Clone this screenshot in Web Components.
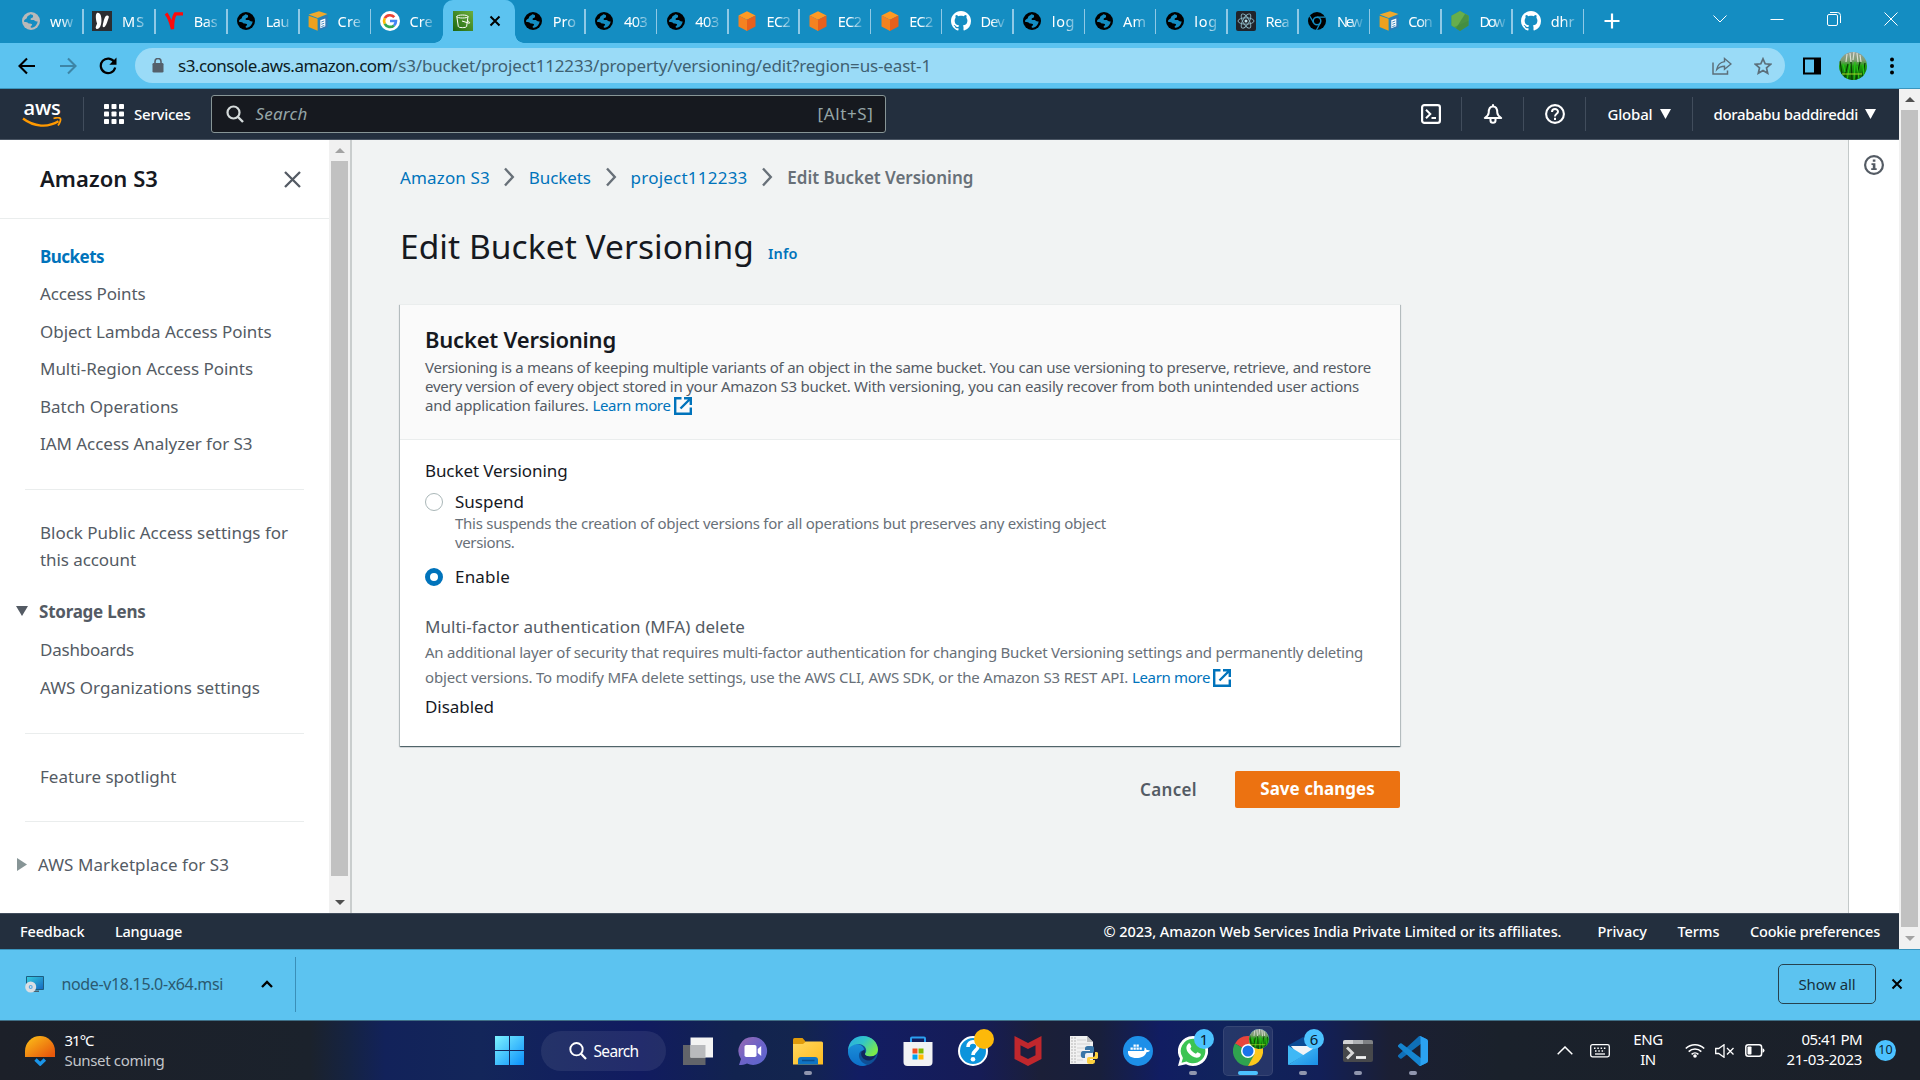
<!DOCTYPE html>
<html lang="en">
<head>
<meta charset="utf-8">
<title>Edit Bucket Versioning</title>
<style>
html,body{margin:0;padding:0}
body{width:1920px;height:1080px;overflow:hidden;display:flex;flex-direction:column;font-family:"Noto Sans","Open Sans",sans-serif;background:#f1f3f3}
body>*{box-sizing:border-box}
</style>
</head>
<body>
<tab-strip></tab-strip>
<address-bar></address-bar>
<console-page></console-page>
<download-bar></download-bar>
<win-taskbar></win-taskbar>
<script>
const define = (name, css, html) => customElements.define(name, class extends HTMLElement {
  connectedCallback() {
    if (this.shadowRoot) return;
    const root = this.attachShadow({ mode: 'open' });
    root.innerHTML = `<style>*{box-sizing:border-box}${css}</style>` + (typeof html === 'function' ? html(this) : html);
  }
});

const globe = c => `<circle cx="10" cy="10" r="9" fill="${c}"/><path d="M9.3 3.2c-1.2 1.5-3.2 1.4-3.3 3.2-.1 1.500-2.500 1.600-2.900 3.100-.2 1.200.2 1.700 1.300 1.600 1.800-.3 2.300 1.100 3.300 1.300 1.300.2 3.300-.2 3.400 1.100.1 1.300-1.500 1.300-1.500 2.300 0 .7.6 1.200 1.500 1 3-.7 5.300-3.500 5.600-6.300-1.300.3-2.200-.2-3.200-1.100-1.200-1-2.700.1-3.700-.700-.9-.9.5-1.600 1.600-2 1.200-.5.600-1.900.4-2.600z" fill="#148dc2"/>`;
const cube = `<path d="M10 .2l8.500 4.300L10 8.800 1.500 4.500z" fill="#ff9a22"/><path d="M1.500 4.500L10 8.800v11.200l-8.500-4.500z" fill="#f58220"/><path d="M18.500 4.500L10 8.800v11.200l8.500-4.500z" fill="#e8601c"/>`;
const box = `<path d="M.6 3.600L11 .2l8.500 2.700-9.800 4z" fill="#f0a92c"/><path d="M.6 4.800l9 3v12L.6 16z" fill="#eda11f"/><path d="M10.600 7.600l9-3.500v12.200l-9 3.500z" fill="#2e7cb8"/><path d="M12.300 9.300l5-1.900v7.900l-5 2z" fill="#fff"/><path d="M13.300 11l3-1.100M13.300 13.300l3-1.100M13.300 15.600l3-1.100" stroke="#2e7cb8" stroke-width=".9"/>`;
const github = `<g transform="scale(1.25)"><path fill="#fff" d="M8 0C3.580 0 0 3.580 0 8c0 3.540 2.290 6.530 5.470 7.590.4.070.55-.17.55-.38 0-.19-.01-.82-.01-1.490-2.010.37-2.530-.49-2.690-.94-.09-.23-.48-.94-.82-1.130-.28-.15-.68-.52-.01-.53.63-.01 1.080.58 1.230.82.72 1.210 1.870.87 2.330.66.070-.52.28-.87.51-1.070-1.780-.2-3.640-.89-3.640-3.950 0-.87.31-1.590.82-2.150-.08-.2-.36-1.020.08-2.120 0 0 .67-.21 2.200.82.64-.18 1.320-.27 2-.27s1.360.09 2 .27c1.530-1.040 2.200-.82 2.200-.82.44 1.100.16 1.920.08 2.120.51.56.82 1.270.82 2.150 0 3.070-1.870 3.750-3.650 3.950.29.25.54.73.54 1.480 0 1.070-.01 1.930-.01 2.200 0 .21.15.46.55.38A8 8 0 0 0 16 8c0-4.420-3.580-8-8-8z"/></g>`;

const ICONS = {
  globeGray: ['0 0 20 20', globe('#b9b9b9')],
  globe: ['0 0 20 20', globe('#000')],
  ms: ['0 0 20 20', `<path fill="#2b2d31" d="M0 0h20v20H0z"/><path fill="#fff" d="M5 2c2.500-.8 4 1.500 4.300 5 .2 2.500.3 4.500-.5 7-.8 3-3.300 4.800-4.600 3.800-1.300-1.200.2-3.300.9-5.300C4 10 3 3 5 2z"/><path fill="#fff" d="M14.300 4.800c1.700-.8 3.200.2 2.300 2.200-1 2.500-1.600 6-3.600 8.500-1.300 1.500-2.600.5-2.300-1 .7-3.500 1.600-8.500 3.600-9.700z"/>`],
  vtutor: ['0 0 20 20', `<path d="M2 2.500C5 6 7 12 8.500 18 8.500 10 9.500 5.500 11.500 2.800H19" fill="none" stroke="#ff0a0a" stroke-width="3.300"/>`],
  box: ['0 0 20 20', box],
  google: ['0 0 20 20', `<circle cx="10" cy="10" r="10" fill="#fff"/><g fill="none" stroke-width="2.700"><path d="M14.300 6.200A5.900 5.900 0 0 0 4.800 7.200" stroke="#ea4335"/><path d="M4.800 7.200a5.900 5.900 0 0 0 0 5.600" stroke="#fbbc05"/><path d="M4.800 12.800a5.900 5.900 0 0 0 9.200 1.600" stroke="#34a853"/><path d="M14 14.400A5.700 5.700 0 0 0 15.900 10H10" stroke="#4285f4"/></g>`],
  s3: ['0 0 20 20', `<defs><linearGradient id="s" x1="0" y1="1" x2="1" y2="0"><stop offset="0" stop-color="#1b660f"/><stop offset="1" stop-color="#6cae3e"/></linearGradient></defs><path fill="url(#s)" d="M0 0h20v20H0z"/><g fill="none" stroke="#fff"><path d="M3.800 5.500c0-2 11.200-2 11.200 0s-11.200 2-11.200 0zl1.500 10c.3 1.500 8 1.500 8.300 0L15 5.500"/><path d="M9 10l7.300 2.300c1-.8-.5-2-2.300-3"/></g>`],
  cube: ['0 0 20 20', cube],
  github: ['0 0 20 20', github],
  react: ['0 0 20 20', `<rect width="20" height="20" rx="2" fill="#20232a"/><g fill="none" stroke="#8fb9c6" stroke-width=".9"><ellipse cx="10" cy="10" rx="8" ry="3.200"/><ellipse cx="10" cy="10" rx="8" ry="3.200" transform="rotate(60 10 10)"/><ellipse cx="10" cy="10" rx="8" ry="3.200" transform="rotate(120 10 10)"/></g><circle cx="10" cy="10" r="1.500" fill="#bfe6f0"/>`],
  chromeDark: ['0 0 20 20', `<circle cx="10" cy="10" r="9" fill="#000"/><circle cx="10" cy="10" r="3.800" fill="none" stroke="#148dc2" stroke-width="1.500"/><path d="M10 6.200h8M6.700 11.900L2.700 5M13.300 11.900L9.500 19" stroke="#148dc2" stroke-width="1.300"/>`],
  node: ['0 0 20 20', `<path d="M10 0l8.500 4.800v9.600L10 20l-8.500-5.600V4.800z" fill="#539e43"/><path d="M10 0l8.500 4.800v5L4 16 1.500 14.400V4.800z" fill="#67ae4c"/><path d="M6 17.300L15 3l3.500 1.800v9.600L10 20z" fill="#3f873f" opacity=".7"/>`],
  x: ['0 0 12 12', `<path d="M1.500 1.500l9 9m0-9l-9 9" stroke="#000" stroke-width="2"/>`],
  plus: ['0 0 16 16', `<path d="M8 .5v15M.5 8h15" stroke="#fff" stroke-width="2.200"/>`],
  winChevron: ['0 0 14 8', `<path d="M.5.5L7 7 13.500.5" fill="none" stroke="#fff" stroke-width="1"/>`],
  winMin: ['0 0 14 14', `<path d="M.5 7.500h13" stroke="#fff"/>`],
  winMax: ['0 0 14 14', `<rect x=".5" y="2.500" width="10" height="11" rx="1.500" fill="none" stroke="#fff"/><path d="M3 .5h7.500a3 3 0 0 1 3 3v7.500" fill="none" stroke="#fff"/>`],
  winClose: ['0 0 14 14', `<path d="M.5.5l13 13m0-13L.5 13.500" stroke="#fff"/>`],
  back: ['0 0 18 18', `<path d="M17 9H2M9 1.500L1.500 9 9 16.500" fill="none" stroke="#000" stroke-width="2.100"/>`],
  fwd: ['0 0 18 18', `<path d="M1 9h15M9 1.500L16.500 9 9 16.500" fill="none" stroke="#3d85a6" stroke-width="2.100"/>`],
  reload: ['0 0 18 18', `<path d="M15.300 5A7.300 7.300 0 1 0 16.200 10.500" fill="none" stroke="#000" stroke-width="2.200"/><path d="M17.500.6v7.200h-7.200z"/>`],
  lock: ['0 0 12 15', `<rect x=".5" y="5" width="11" height="9.500" rx="1.300" fill="#54606b"/><path d="M3 5V3.500a3 3 0 0 1 6 0V5" fill="none" stroke="#54606b" stroke-width="1.600"/>`],
  share: ['0 0 20 18', `<path d="M1 5.500V17h14.500v-3.500" fill="none" stroke="#5c6f7a" stroke-width="1.500"/><path d="M12.500 1.500L19 7l-6.500 5.300V9.200c-3.500 0-5.700 1-7.800 3.400.7-4 3.300-7.300 7.800-8z" fill="none" stroke="#5c6f7a" stroke-width="1.400"/>`],
  star: ['0 0 18 18', `<path d="M9 1.800l2.200 5 5.400.5-4.100 3.600 1.200 5.300L9 13.400l-4.700 2.800 1.200-5.300L1.400 7.300l5.400-.5z" fill="none" stroke="#5c6f7a" stroke-width="1.700"/>`],
  panel: ['0 0 18 18', `<rect x="1" y="1.500" width="16" height="15" fill="none" stroke="#000" stroke-width="2"/><path d="M11 1h7v16h-7z"/>`],
  avatar: ['0 0 28 28', `<defs><clipPath id="c"><circle cx="14" cy="14" r="14"/></clipPath><linearGradient id="a" x1="0" y1="0" x2="0" y2="1"><stop offset="0" stop-color="#9aa197"/><stop offset=".3" stop-color="#7d9c70"/><stop offset=".5" stop-color="#1fa010"/><stop offset="1" stop-color="#0c5a06"/></linearGradient></defs><g clip-path="url(#c)"><path fill="url(#a)" d="M0 0h28v28H0z"/><path d="M5 28L9 12M13 28L12 10M17 28l4-18M23 28l3-17M3 22L1 9" stroke="#0a3d06" stroke-width="1.200" fill="none"/><path d="M8 28l3-16M15 28l1-18M20 27l-2-13M25 25l-1-12M6 20L4 12" stroke="#27c316" stroke-width="1.200" fill="none"/><path d="M3 22h20" stroke="#a6d629" stroke-width="1"/><path d="M8 2l-1 8M11 1l1 9M15 0l-1 8M18 1l1 9M21 3l1 7" stroke="#d9ded2" stroke-width="1.200"/></g>`],
  dots: ['0 0 4 18', `<circle cx="2" cy="2.500" r="2"/><circle cx="2" cy="9" r="2"/><circle cx="2" cy="15.500" r="2"/>`],
  smile: ['0 0 40 11', `<path d="M1 1.500c11 8.500 25 9.300 35.500 2.800" fill="none" stroke="#f90" stroke-width="2.300"/><path d="M31.500 1.500c2.500-.8 6-.9 6.800 0 .8 1-.4 4.800-2.300 7" fill="none" stroke="#f90" stroke-width="1.800"/>`],
  grid: ['0 0 20 20', `<g fill="#fff">${[0, 7.5, 15].map(y => [0, 7.5, 15].map(x => `<rect x="${x}" y="${y}" width="5" height="5" rx=".8"/>`).join('')).join('')}</g>`],
  mag: ['0 0 18 18', `<circle cx="7.500" cy="7.500" r="6" fill="none" stroke="#d5dbdb" stroke-width="2.200"/><path d="M12 12l5 5" stroke="#d5dbdb" stroke-width="2.400"/>`],
  shell: ['0 0 20 20', `<rect x="1.100" y="1.100" width="17.800" height="17.800" rx="2.200" fill="none" stroke="#fff" stroke-width="2.200"/><path d="M5 5.700L9.300 10 5 14.300M10.500 14H15" fill="none" stroke="#fff" stroke-width="2"/>`],
  bell: ['0 0 20 20', `<path d="M10 .2v3M10 2.600c-4.300 0-4.300 4-4.300 6.200 0 2.200-1.600 3.700-3.900 5.200h16.400c-2.300-1.500-3.900-3-3.900-5.200 0-2.200 0-6.200-4.300-6.200z" fill="none" stroke="#fff" stroke-width="2" stroke-linejoin="round"/><path d="M7.500 14.500v2c0 3 5 3 5 0v-2" fill="none" stroke="#fff" stroke-width="2"/>`],
  help: ['0 0 20 20', `<circle cx="10" cy="10" r="8.900" fill="none" stroke="#fff" stroke-width="2.100"/><path d="M7 8c0-4 6-3.800 6-.3 0 2.200-3 2-3 4.800" fill="none" stroke="#fff" stroke-width="2"/><path d="M9 13.800h2V16H9z" fill="#fff"/>`],
  tri: ['0 0 11 10', `<path d="M0 0h11L5.500 10z" fill="currentColor"/>`],
  triRight: ['0 0 10 13', `<path d="M0 0l10 6.500L0 13z" fill="#879596"/>`],
  close: ['0 0 17 17', `<path d="M1 1l15 15M16 1L1 16" stroke="#545b64" stroke-width="2.300"/>`],
  info: ['0 0 20 20', `<circle cx="10" cy="10" r="8.900" fill="none" stroke="#545b64" stroke-width="2.200"/><path d="M8.800 4.500h2.600v2.300H8.800zM7.500 8.200h3.900v5h1.300v1.900H7.200v-1.900h1.600v-3.100H7.500z" fill="#545b64"/>`],
  crumb: ['0 0 12 20', `<path d="M2 1.500L9.800 10 2 18.500" fill="none" stroke="#687078" stroke-width="2.400"/>`],
  ext: ['0 0 18 18', `<path d="M7.500 1.200H1.200v15.600h15.600v-6.300" fill="none" stroke="#0073bb" stroke-width="2.400"/><path d="M10 1.200h6.800V8M16.500 1.500L6.500 11.500" fill="none" stroke="#0073bb" stroke-width="2.400"/>`],
  msi: ['0 0 20 17', `<defs><linearGradient id="m" x1="0" y1="0" x2="1" y2="1"><stop offset="0" stop-color="#35d0e0"/><stop offset="1" stop-color="#1565c0"/></linearGradient></defs><path d="M1.500.5h17v13h-17z" fill="url(#m)" stroke="#1c5d80"/><path d="M8 14.500h6v1.500H7z" fill="#46606e"/><circle cx="5.700" cy="11" r="5.500" fill="#dcdfe3"/><circle cx="5.700" cy="11" r="2" fill="#5aa9e0"/><circle cx="5.700" cy="11" r=".8" fill="#fff"/>`],
  up: ['0 0 12 8', `<path d="M1 7l5-5 5 5" fill="none" stroke="#000" stroke-width="2.300"/>`],
  sunset: ['0 0 30 30', `<defs><linearGradient id="u" x1="0" y1="0" x2="1" y2="1"><stop offset="0" stop-color="#fcc419"/><stop offset=".9" stop-color="#e8590c"/></linearGradient></defs><path d="M0 21V15a15 15 0 0 1 30 0v6z" fill="url(#u)"/><path d="M10.500 23.500l4.700 4.500 4.700-4.500" fill="none" stroke="#1b95e8" stroke-width="3.400"/>`],
  win: ['0 0 29 29', `<defs><linearGradient id="w" gradientUnits="userSpaceOnUse" x1="0" y1="0" x2="29" y2="29"><stop offset="0" stop-color="#7df3ff"/><stop offset="1" stop-color="#0a8ffb"/></linearGradient></defs><path d="M0 0h14v14H0zM15 0h14v14H15zM0 15h14v14H0zM15 15h14v14H15z" fill="url(#w)"/>`],
  magW: ['0 0 18 18', `<circle cx="7.500" cy="7.200" r="6.200" fill="none" stroke="#fff" stroke-width="1.900"/><path d="M12 11.700l5 5.300" stroke="#fff" stroke-width="2.200"/>`],
  taskview: ['0 0 30 30', `<path d="M0 9h22.500v20H0z" fill="#62646a"/><path d="M7.500 1.500H30v20H7.500z" fill="#f3f3f3"/><path d="M7.500 9h15v12.500h-15z" fill="#b9babd"/>`],
  chat: ['0 0 30 30', `<defs><linearGradient id="t" x1="0" y1="0" x2="1" y2="1"><stop offset="0" stop-color="#9b6bb0"/><stop offset=".5" stop-color="#6d63c8"/><stop offset="1" stop-color="#5b66cf"/></linearGradient></defs><path d="M15 1a14 14 0 1 1-6 26.600C6.500 29 4 29 1 29l2-6A14 14 0 0 1 15 1z" fill="url(#t)"/><rect x="6.500" y="9" width="12" height="12" rx="1.800" fill="#fff"/><path d="M19.700 13l3.500-3v10l-3.500-3z" fill="#fff"/>`],
  explorer: ['0 0 30 30', `<defs><linearGradient id="e" x1="0" y1="0" x2="1" y2="1"><stop offset="0" stop-color="#ffd75e"/><stop offset="1" stop-color="#fdbb20"/></linearGradient></defs><path d="M0 3.500q0-1.500 1.500-1.500h8l3.500 4v5H0z" fill="#e09b0b"/><path d="M0 8h10l3-2.500h15.500Q30 5.500 30 7v21.500H0z" fill="url(#e)"/><path d="M5 28.500V24q0-3 3-3h14q3 0 3 3v4.500z" fill="#0f74c4"/><path d="M9 24.500h12.500" stroke="#0a4f8f" stroke-width="1.500"/>`],
  edge: ['0 0 30 30', `<defs><linearGradient id="g" x1="0" y1="0" x2="1" y2=".6"><stop offset="0" stop-color="#2aa7e8"/><stop offset=".5" stop-color="#32c6c6"/><stop offset="1" stop-color="#7bea4a"/></linearGradient><linearGradient id="h" x1="0" y1="0" x2="0" y2="1"><stop offset="0" stop-color="#1b8fd8"/><stop offset="1" stop-color="#0c6fc9"/></linearGradient></defs><circle cx="15" cy="15" r="15" fill="#0f4f96"/><path d="M15 30A15 15 0 0 1 0 14c2-6 9-7 12.500-5 3 1.500 4 4 3 5.500-3 0-5 2-4.500 6 .6 4 4 7 8 8.300A15 15 0 0 1 15 30z" fill="url(#h)"/><path d="M0 14C1 5 7 0 15 0c9 0 15 7 15 13.500 0 4.500-3.500 7-7.500 7-3.500 0-6-1.300-5.500-2.700 3-3 .5-8.800-5-9.600C7 7.500 2 10 0 14z" fill="url(#g)"/><path d="M17 17.800c-.5 1.400 2 2.700 5.500 2.700 2.500 0 4.500-.7 6-2.500-1.500 4-5 7-8.500 6.500-4.500-.5-8-4.500-6.500-8.500.7-1.300 2.500-2 3.500-1.500z" fill="#12265c"/>`],
  store: ['0 0 30 30', `<path d="M8 8V2.500q0-1 1-1h12q1 0 1 1V8" fill="none" stroke="#2a9ff0" stroke-width="2"/><path d="M.5 6h29v20q0 4-4 4h-21q-4 0-4-4z" fill="#f1f2f4"/><path d="M9.500 12.500h5v5h-5z" fill="#f25022"/><path d="M15.500 12.500h5v5h-5z" fill="#7fba00"/><path d="M9.500 18.500h5v5h-5z" fill="#00a4ef"/><path d="M15.500 18.500h5v5h-5z" fill="#ffb900"/>`],
  gethelp: ['0 0 30 30', `<circle cx="15" cy="15" r="14" fill="#0c94dc" stroke="#fff" stroke-width="2"/><path d="M10 11c0-7 10-6.500 10-.5 0 4-5 4-5 8.500" fill="none" stroke="#fff" stroke-width="3.600"/><circle cx="15" cy="23.200" r="2.300" fill="#fff"/>`],
  mcafee: ['0 0 30 30', `<path d="M1.500 0L15 7 28.500 0v23L15 30 1.500 23z" fill="#c0272d"/><path d="M7.500 9.300L15 13l7.500-3.700v10L15 23l-7.500-3.700z" fill="#1b1f3f"/>`],
  py: ['0 0 30 30', `<path d="M2 0h17l6 6v22H2z" fill="#f1f1f1"/><path d="M4 1v26M7 1v26" stroke="#b5b5b5" stroke-dasharray="2 1"/><path d="M9 4h9M9 8h13M9 12h13M9 16h8M9 20h5M9 24h6" stroke="#d3d3d3"/><path d="M19 0v6h6z" fill="#bbb"/><path d="M21 10c-4 0-4 1-4 4h5v1h-7c-3 0-3 7 0 7h2v-3q0-2 2-2h5q2 0 2-2v-3c0-2-2-2-5-2z" fill="#3a76a8"/><path d="M23 28c4 0 4-1 4-4h-5v-1h7c2-1 2-7-.5-7H27v3q0 2-2 2h-4q-2 0-2 2v3c0 2 2 2 4 2z" fill="#fdd140"/>`],
  docker: ['0 0 30 30', `<circle cx="15" cy="15" r="15" fill="#1d8fe8"/><path d="M5 15h16c.8-1.500.5-3 .5-3.500 1.500.5 2 1.500 2 2.500 1-.2 2.500-.1 3.500.6-.7 1.300-2 1.700-3.500 1.700C22 20.500 18 22 13.500 22 8 22 4.500 20 5 15z" fill="#fff"/><path d="M7.500 11.500h2.300v2.300H7.500zM10.500 11.500h2.300v2.300h-2.300zM13.500 11.500h2.300v2.300h-2.300zM16.500 11.500h2.300v2.300h-2.300zM10.500 8.500h2.300v2.300h-2.300zM13.500 8.500h2.300v2.300h-2.300z" fill="#fff"/>`],
  whatsapp: ['0 0 30 30', `<path d="M15 0a15 15 0 1 1-7 28.200L0 30l2-7.500A15 15 0 0 1 15 0z" fill="#fff"/><path d="M15 2.700a12.300 12.300 0 1 1-6.500 22.700l-5 1.300 1.400-4.800A12.300 12.300 0 0 1 15 2.700z" fill="#3cc453"/><path d="M10.500 7.500c1-.5 1.500-.2 2 1l.8 2c.2.700-.9 1.600-1 2 1 2.400 3 4.200 5.500 5.200.5 0 1.200-1.300 1.800-1.400l3 1.400c.6.500-.1 2.800-1.600 3.600-3.500 1.500-8-1.300-10.500-4.300-2-2.500-3.500-6.500 0-9.500z" fill="#fff"/>`],
  chrome: ['0 0 30 30', `<path d="M15 15L2 7.500A15 15 0 0 1 28 7.500z" fill="#e8453c"/><path d="M15 15L2 7.500A15 15 0 0 0 15 30l6.500-11z" fill="#2fa34f"/><path d="M15 30A15 15 0 0 0 28 7.500H15l6.300 11z" fill="#fdc81c"/><circle cx="15" cy="15" r="7" fill="#fff"/><circle cx="15" cy="15" r="5.500" fill="#1a73e8"/>`],
  mail: ['0 0 30 30', `<defs><linearGradient id="l" x1="0" y1="0" x2="1" y2="1"><stop offset="0" stop-color="#50c8f8"/><stop offset="1" stop-color="#1a8ee6"/></linearGradient></defs><path d="M0 9.500L15 1l15 8.500V20H0z" fill="#0a4a94"/><path d="M3 10h24l-6 10-11-1z" fill="#f2f4f7"/><path d="M0 9.500l16 10L0 29z" fill="#3fb8f5"/><path d="M30 9.500L0 29h30z" fill="url(#l)"/>`],
  term: ['0 0 30 30', `<rect y="4" width="30" height="22" rx="2" fill="#47484b"/><path d="M0 8V6q0-2 2-2h18v4z" fill="#d2d2d4"/><path d="M10 4h10v4H10z" fill="#aeb0b3"/><path d="M20 4h8q2 0 2 2v2H20z" fill="#7f8184"/><path d="M4 11.500l5.500 5.500L4 22.500" fill="none" stroke="#d9d9d9" stroke-width="2.800"/><path d="M13 21.500h10" stroke="#f2f2f2" stroke-width="2.800"/>`],
  vscode: ['0 0 100 100', `<path fill="#0f6fb8" d="M96.460 10.800L75.860.88a6.230 6.230 0 0 0-7.100 1.200L1.300 63.580a4.170 4.170 0 0 0 0 6.160l5.510 5.010a4.170 4.170 0 0 0 5.320.24L93.360 13.400c2.730-2.070 6.640-.12 6.640 3.300v-.24a6.250 6.250 0 0 0-3.540-5.630z"/><path fill="#1585d0" d="M96.460 89.170l-20.600 9.920a6.230 6.230 0 0 1-7.100-1.210L1.300 36.370a4.170 4.170 0 0 1 0-6.170l5.510-5a4.170 4.170 0 0 1 5.320-.24l81.230 61.620c2.730 2.070 6.640.12 6.640-3.300v.24a6.250 6.250 0 0 1-3.540 5.630z"/><path fill="#2ba2f2" d="M75.860 99.100a6.230 6.230 0 0 1-7.100-1.210c2.300 2.310 6.240.68 6.240-2.590V4.670c0-3.260-3.940-4.890-6.240-2.580a6.230 6.230 0 0 1 7.100-1.210l20.600 9.900A6.250 6.250 0 0 1 100 16.400v67.100c0 2.400-1.380 4.600-3.540 5.640z"/>`],
  trayUp: ['0 0 16 9', `<path d="M.7 8.300L8 1l7.300 7.300" fill="none" stroke="#fff" stroke-width="1.500"/>`],
  keyb: ['0 0 20 14', `<rect x=".7" y=".7" width="18.600" height="12.100" rx="1.800" fill="none" stroke="#fff" stroke-width="1.300"/><path d="M4 4.300h12" stroke="#fff" stroke-width="1.500" stroke-dasharray="1.500 1.800"/><path d="M5 7h10" stroke="#fff" stroke-width="1.500" stroke-dasharray="1.500 1.800"/><path d="M5 10h10" stroke="#fff" stroke-width="1.300"/>`],
  wifi: ['0 0 20 15', `<g fill="none" stroke="#fff" stroke-width="1.600"><path d="M.8 5.500a13 13 0 0 1 18.400 0M3.700 8.600a9 9 0 0 1 12.600 0M6.600 11.300a5 5 0 0 1 6.800 0"/></g><circle cx="10" cy="13" r="1.800" fill="#fff"/>`],
  mute: ['0 0 20 14', `<path d="M.7 4.500h3L9 .8v12.400L3.700 9.500h-3z" fill="none" stroke="#fff" stroke-width="1.300"/><path d="M12 4l6.500 6.500M18.500 4L12 10.500" stroke="#fff" stroke-width="1.300"/>`],
  batt: ['0 0 20 13', `<rect x=".8" y=".8" width="15.800" height="11.400" rx="2.500" fill="none" stroke="#fff" stroke-width="1.500"/><rect x="2.500" y="2.500" width="4" height="8" rx=".8" fill="#fff"/><path d="M17.500 4.300q2 .3 2 2.200t-2 2.200z" fill="#fff"/>`]
};

define('svg-icon', ':host{display:block;flex:none;line-height:0}svg{display:block}', el => {
  const [vb, body] = ICONS[el.getAttribute('name')];
  const p = vb.split(' ');
  const w = el.getAttribute('w') || p[2], h = el.getAttribute('h') || p[3];
  return `<svg width="${w}" height="${h}" viewBox="${vb}" preserveAspectRatio="none">${body}</svg>`;
});

/* Text run that tracks its letters so that it fills a given width. */
customElements.define('fit-text', class extends HTMLElement {
  connectedCallback() {
    if (this.shadowRoot) return;
    const root = this.attachShadow({ mode: 'open' });
    root.innerHTML = '<style>:host{display:inline-block;white-space:pre;flex:none}span{display:inline-block}</style><span><slot></slot></span>';
    const w = parseFloat(this.getAttribute('w'));
    if (!w) return;
    const s = root.querySelector('span');
    const nat = s.getBoundingClientRect().width;
    const n = this.textContent.length;
    if (nat) s.style.letterSpacing = ((w + 1 - nat) / n).toFixed(4) + 'px';
    this.style.width = w + 1 + 'px';
  }
});
const t = (text, w, cls = '') => `<fit-text w="${w}" class="${cls}">${text}</fit-text>`;
const ic = (n, w, h) => `<svg-icon name="${n}"${w ? ` w="${w}"` : ''}${h ? ` h="${h}"` : ''}></svg-icon>`;

/* ---------- browser chrome ---------- */
define('browser-tab', `
:host{display:flex;align-items:center;height:43px;padding:0 0 1px 8.500px;flex:none;width:71.3px;color:#fff;font-size:14.500px;position:relative}
:host([wide]){width:71.900px}
.t{width:26px;white-space:nowrap;margin-left:9.500px;line-height:24px;-webkit-mask-image:linear-gradient(90deg,#000 45%,rgba(0,0,0,.25) 92%)}
.s{width:1.500px;height:25px;background:#8fc9e6;margin-left:auto;margin-top:1px}
:host([active]){background:#5cc3f0;border-radius:10px 10px 0 0;padding-left:10px}
:host([active])::before,:host([active])::after{content:"";position:absolute;bottom:0;width:9px;height:9px}
:host([active])::before{left:-9px;background:radial-gradient(circle at 0 0,transparent 8.500px,#5cc3f0 9px)}
:host([active])::after{right:-9px;background:radial-gradient(circle at 100% 0,transparent 8.500px,#5cc3f0 9px)}
:host([active]) svg-icon+svg-icon{margin-left:16px}`,
  el => el.hasAttribute('active') ? ic('s3', 20, 20) + ic('x', 12, 12)
    : ic(el.getAttribute('icon'), 20, 20) + `<div class="t">${t(el.getAttribute('label'), 22.5)}</div>` + (el.hasAttribute('last') ? '' : '<div class="s"></div>'));

const tabs = [['globeGray', 'ww'], ['ms', 'MS'], ['vtutor', 'Bas'], ['globe', 'Lau'], ['box', 'Cre'], ['google', 'Cre', 1], 0,
  ['globe', 'Pro'], ['globe', '403'], ['globe', '403'], ['cube', 'EC2'], ['cube', 'EC2'], ['cube', 'EC2'], ['github', 'Dev'], ['globe', 'log'], ['globe', 'Am'], ['globe', 'log'],
  ['react', 'Rea'], ['chromeDark', 'New'], ['box', 'Con'], ['node', 'Dow'], ['github', 'dhr']];
define('tab-strip', `
:host{display:flex;height:43px;background:#148dc2;padding-left:12px;flex:none}
.n{display:flex;align-items:center;padding:0 0 1px 20px;height:43px}
.w{display:flex;align-items:center;height:37px;margin-left:auto;padding-right:22px;gap:43px}`,
  tabs.map((x, i) => x ? `<browser-tab icon="${x[0]}" label="${x[1]}" ${i < 6 ? 'wide' : ''} ${x[2] ? 'last' : ''}></browser-tab>` : '<browser-tab active></browser-tab>').join('') +
  `<div class="n">${ic('plus')}</div><div class="w">${ic('winChevron')}${ic('winMin')}${ic('winMax')}${ic('winClose')}</div>`);

define('address-bar', `
:host{display:flex;align-items:center;height:46px;background:#5cc3f0;border-bottom:1px solid #3a95bd;padding-left:18px;flex:none}
.pill{display:flex;align-items:center;width:1650px;height:35px;border-radius:18px;background:#9adbf7;margin-left:18px;padding:0 13px 0 17px;color:#3f6172;font-size:17px;line-height:34px}
.h{color:#0c1b24;margin-left:14px}
.r{display:flex;align-items:center;margin-left:auto;gap:22px}
.b{display:flex;gap:22.500px}
.e{display:flex;align-items:center;margin-left:18px}
.e>:nth-child(2){margin:0 23px 0 18px}`,
  `<div class="b">${ic('back')}${ic('fwd')}${ic('reload')}</div>
  <div class="pill">${ic('lock')}${t('s3.console.aws.amazon.com', 213, 'h')}${t('/s3/bucket/project112233/property/versioning/edit?region=us-east-1', 538)}<div class="r">${ic('share')}${ic('star')}</div></div>
  <div class="e">${ic('panel')}${ic('avatar')}${ic('dots')}</div>`);

define('scroll-bar', `
:host{display:flex;flex-direction:column;width:21px;background:#f1f1f1;flex:none;align-items:center}
.a{height:21px;display:flex;align-items:center;flex:none}
i{display:block;border:5px solid transparent}
.u i{border-top:0;border-bottom-color:var(--up)}
.d i{border-bottom:0;border-top-color:var(--down)}
.th{width:17px;background:#c1c1c1;flex:none}`,
  el => `<div class="a u"><i></i></div><div class="th" style="height:${el.getAttribute('thumb')}px"></div><div class="a d" style="margin-top:auto"><i></i></div>`);

/* ---------- console ---------- */
define('aws-nav', `
:host{display:flex;align-items:center;height:51px;background:#232f3e;border-bottom:1px solid #4a5563;color:#fff;font-size:15px;font-weight:500;line-height:24px;flex:none}
.logo{width:40px;margin-left:22px;height:28px;display:flex;flex-direction:column;margin-bottom:1px}
.logo b{font:600 20px/16px "Open Sans","Noto Sans",sans-serif;height:17px;display:flex;justify-content:center}
.sep{width:1px;height:34px;background:#414d5c}
.search{display:flex;align-items:center;width:675px;height:38px;background:#16191f;border:1px solid #879596;border-radius:3px;margin-left:20px;padding:0 11px 0 14px;color:#95a5a6;font-size:17px;font-weight:400}
.search .p{font-style:italic;margin-left:12px}
.search .k{margin-left:auto}
.r{display:flex;align-items:center;margin-left:auto;padding-right:23px}
.r>svg-icon{margin:0 20.500px 0 20.500px}`,
  `<div class="logo"><b>${t('aws', 36)}</b>${ic('smile', 40, 11)}</div>
  <div class="sep" style="margin-left:21px;margin-right:20px"></div>${ic('grid')}
  <span style="margin-left:10px">${t('Services', 55.5)}</span>
  <div class="search">${ic('mag')}${t('Search', 51, 'p')}${t('[Alt+S]', 55, 'k')}</div>
  <div class="r">${ic('shell')}<div class="sep"></div>${ic('bell')}<div class="sep"></div>${ic('help')}<div class="sep"></div>
  <span style="margin-left:21.500px">${t('Global', 44)}</span>${ic('tri', 11, 10).replace('<svg-icon', '<svg-icon style="margin:0 21px 0 7px"')}<div class="sep"></div>
  <span style="margin-left:21px">${t('dorababu baddireddi', 143.5)}</span>${ic('tri', 11, 10).replace('<svg-icon', '<svg-icon style="margin:0 0 0 7px"')}</div>`);

define('side-nav', `
:host{display:flex;width:352px;flex:none;background:#fff;border-right:2px solid #c9cdcd;color:#545b64;font-size:17px}
.c{flex:1;min-width:0;display:flex;flex-direction:column}
.hd{display:flex;height:79px;border-bottom:1px solid #eaeded;align-items:center;padding:0 28px 0 40px;justify-content:space-between;color:#16191f;font-size:22px;font-weight:600;flex:none}
.l{height:37.4px;line-height:37.4px;padding-left:40px;white-space:nowrap}
.l.on{color:#0073bb;font-weight:700}
.g{display:flex;align-items:center;height:37.400px;padding-left:16px}
.g fit-text{margin-left:11px}
hr{border:0;height:1px;background:#eaeded;margin:27px 25px;width:279px;flex:none}`,
  `<div class="c"><div class="hd"><span style="margin-bottom:3px">${t('Amazon S3', 117)}</span>${ic('close')}</div><div style="height:19px"></div>
  <div class="l on">${t('Buckets', 63)}</div><div class="l">${t('Access Points', 104.5)}</div><div class="l">${t('Object Lambda Access Points', 230.5)}</div>
  <div class="l">${t('Multi-Region Access Points', 212)}</div><div class="l">${t('Batch Operations', 137.5)}</div><div class="l">${t('IAM Access Analyzer for S3', 211.5)}</div>
  <hr style="margin-bottom:29px"><div class="l" style="height:27px;line-height:27px">${t('Block Public Access settings for', 247)}</div><div class="l" style="height:27px;line-height:27px">${t('this account', 95)}</div>
  <div class="g" style="font-weight:700;margin-top:19px">${ic('tri', 12, 10)}${t('Storage Lens', 105.5)}</div>
  <div class="l" style="margin-top:1.500px">${t('Dashboards', 93)}</div><div class="l">${t('AWS Organizations settings', 219)}</div>
  <hr style="margin-bottom:24px">
  <div class="l">${t('Feature spotlight', 135.5)}</div>
  <hr style="margin-bottom:23.500px;margin-top:26px"><div class="g" style="padding-left:17px">${ic('triRight')}${t('AWS Marketplace for S3', 190)}</div></div>
  <scroll-bar thumb="715" style="--up:#a3a3a3;--down:#505050"></scroll-bar>`);

define('radio-option', `
:host{display:flex;font-size:17px;color:#16191f}
i{width:18px;height:18px;border-radius:50%;border:1.500px solid #aab7b8;background:#fff;margin-right:12px;flex:none;margin-top:4px}
:host([checked]) i{border:5.500px solid #0073bb}
div{line-height:26px;height:26px}
::slotted(*){display:block}`,
  el => `<i></i><section><div style="height:25px">${t(el.getAttribute('label'), el.getAttribute('w'))}</div><slot></slot></section>`);

define('bucket-page', `
:host{display:block;flex:1;min-width:0;padding:24px 0 0 48px;color:#16191f;font-size:17px;background:#f1f3f3}
.bc{display:flex;align-items:center;height:26px;color:#0073bb;gap:13.900px}
.bc b{color:#687078;font-weight:600}
h1{display:flex;align-items:baseline;margin:33px 0 0;font-weight:400;font-size:33.500px;line-height:46px;height:46px}
h1 .i{font-size:14.500px;color:#0073bb;font-weight:600;margin-left:14px}
.card{width:1000px;height:442px;margin-top:35px;background:#fff;box-shadow:0 1px 1px rgba(0,28,36,.5),1px 1px 1px rgba(0,28,36,.18),-1px 1px 1px rgba(0,28,36,.18);border-top:1px solid #eaeded}
.hd{height:135px;background:#fafafa;border-bottom:1px solid #eaeded;padding:17px 25px 0;color:#545b64;font-size:15px}
h2{margin:0 0 2px;font-size:22px;line-height:34px;font-weight:600;color:#16191f}
.ln{display:flex;align-items:center;height:19px;line-height:19px}
a{color:#0073bb;display:flex;align-items:center;gap:3px;margin-left:4px}
.bd{padding:18px 25px 0}
.q{line-height:26px;height:26px}
.s{font-size:15px;color:#687078}
.act{display:flex;width:1000px;justify-content:flex-end;align-items:center;margin-top:25px;font-weight:600;line-height:36px;height:37px;color:#545b64}
.btn{margin-left:38px;width:165px;height:37px;background:#ec7211;color:#fff;border-radius:2px;display:flex;justify-content:center;font-weight:700}`,
  `<div class="bc"><span style="margin-right:-1px">${t('Amazon S3', 89)}</span>${ic('crumb')}${t('Buckets', 61)}${ic('crumb')}${t('project112233', 116)}${ic('crumb')}<b>${t('Edit Bucket Versioning', 185)}</b></div>
  <h1>${t('Edit Bucket Versioning', 353)}<span class="i">${t('Info', 28.5)}</span></h1>
  <div class="card"><div class="hd"><h2>${t('Bucket Versioning', 190)}</h2>
  <div class="ln">${t('Versioning is a means of keeping multiple variants of an object in the same bucket. You can use versioning to preserve, retrieve, and restore', 945)}</div>
  <div class="ln">${t('every version of every object stored in your Amazon S3 bucket. With versioning, you can easily recover from both unintended user actions', 933)}</div>
  <div class="ln">${t('and application failures.', 162.5)}<a>${t('Learn more', 77)}${ic('ext')}</a></div></div>
  <div class="bd"><div class="q">${t('Bucket Versioning', 141.5)}</div>
  <radio-option label="Suspend" w="68" style="margin-top:5px"><div class="s ln">${t('This suspends the creation of object versions for all operations but preserves any existing object', 650)}</div><div class="s ln">${t('versions.', 58.5)}</div></radio-option>
  <radio-option label="Enable" w="54" checked style="margin-top:12px"></radio-option>
  <div class="q" style="color:#545b64;margin-top:25px">${t('Multi-factor authentication (MFA) delete', 319)}</div>
  <div class="ln s" style="height:25px">${t('An additional layer of security that requires multi-factor authentication for changing Bucket Versioning settings and permanently deleting', 937)}</div>
  <div class="ln s" style="height:25px">${t('object versions. To modify MFA delete settings, use the AWS CLI, AWS SDK, or the Amazon S3 REST API.', 702)}<a>${t('Learn more', 77)}${ic('ext')}</a></div>
  <div class="q" style="margin-top:4px">${t('Disabled', 68)}</div></div></div>
  <div class="act">${t('Cancel', 56)}<div class="btn">${t('Save changes', 113.5)}</div></div>`);

define('aws-footer', `
:host{display:flex;align-items:center;height:36px;background:#232f3e;border-top:1px solid #414d5c;color:#fff;font-size:14.500px;font-weight:500;padding:0 19px 1px 20px;line-height:34px;flex:none}
.r{display:flex;margin-left:auto}`,
  `${t('Feedback', 63.5)}<span style="margin-left:30.500px">${t('Language', 66)}</span><div class="r">${t('© 2023, Amazon Web Services India Private Limited or its affiliates.', 457)}<span style="margin-left:36px">${t('Privacy', 48.5)}</span><span style="margin-left:30.500px">${t('Terms', 41)}</span><span style="margin-left:30.500px">${t('Cookie preferences', 129)}</span></div>`);

define('console-page', `
:host{display:flex;height:860px;flex:none}
.m{width:1899px;display:flex;flex-direction:column}
.row{display:flex;flex:1;min-height:0}
.help{width:51px;background:#fff;border-left:1px solid #c3c9c9;padding:15px 0 0 15px}`,
  `<div class="m"><aws-nav></aws-nav><div class="row"><side-nav></side-nav><bucket-page></bucket-page><div class="help">${ic('info')}</div></div><aws-footer></aws-footer></div><scroll-bar thumb="817" style="--up:#505050;--down:#a3a3a3"></scroll-bar>`);

/* ---------- download shelf and taskbar ---------- */
define('download-bar', `
:host{display:flex;align-items:center;height:72px;background:#5cc3f0;border-top:1px solid #3a95bd;border-bottom:1px solid #3f6f86;flex:none;padding:0 17px 2px 25px;font-size:16px;color:#2b5a70}
.f{display:flex;align-items:center}
.sep{width:1px;height:55px;background:#3a8fb8;margin-left:22px}
.b{margin-left:auto;width:98px;height:40px;border:1.500px solid #27424f;border-radius:5px;display:flex;align-items:center;justify-content:center;color:#16303c;font-size:15px;margin-right:15px}`,
  `<div class="f">${ic('msi')}<span style="margin-left:16.500px">${t('node-v18.15.0-x64.msi', 160.5)}</span><span style="margin-left:37.500px">${ic('up')}</span></div><div class="sep"></div><div class="b">${t('Show all', 56)}</div>${ic('x')}`);

define('task-app', `
:host{display:flex;width:55px;height:60px;align-items:center;justify-content:center;position:relative;flex:none}
.i{width:50px;height:50px;border-radius:5px;display:flex;align-items:center;justify-content:center}
:host([active]) .i{background:rgba(255,255,255,.09);box-shadow:inset 0 0 0 1px rgba(255,255,255,.08)}
.run{position:absolute;bottom:6px;left:23.500px;width:8px;height:4px;border-radius:2px;background:#9096ae}
:host([active]) .run{left:17.500px;width:20px;background:#4cc2ff}
.bd{position:absolute;left:28.500px;top:8px;width:20px;height:20px;border-radius:50%;font-size:15px;line-height:20px;text-align:center;color:#08202e;background:#4cc2ff}`,
  el => { const b = el.getAttribute('badge');
    return `<div class="i">${ic(el.getAttribute('icon'), el.getAttribute('s') || 30, el.getAttribute('s') || 30)}</div>` +
      (el.hasAttribute('run') ? '<div class="run"></div>' : '') +
      (b === 'dot' ? '<div class="bd" style="background:#fdb90a"></div>' : b === 'av' ? `<div class="bd">${ic('avatar', 20, 20)}</div>` : b ? `<div class="bd">${b}</div>` : ''); });

define('win-taskbar', `
:host{display:flex;align-items:center;height:59px;flex:1;color:#fff;font-size:15px;line-height:20px;background:linear-gradient(90deg,#1c2029 0,#1b222c 310px,#152343 350px,#12225a 385px,#13265a 480px,#111b60 640px,#12234f 735px,#13254e 800px,#121d63 860px,#161c56 980px,#1b1f38 1040px,#181f3c 1100px,#111d62 1160px,#10245b 1230px,#121f58 1320px,#1b1f34 1390px,#1a212b 1500px,#1b2029 1920px)}
.w{display:flex;align-items:center;gap:9.500px;width:457px;padding-left:25px}
.w div div,.w p{margin:-1px 0 1px;height:20px}
.w p{color:#c3c6cb}
.s{display:flex;align-items:center;justify-content:center;width:125px;height:40px;border-radius:20px;background:rgba(255,255,255,.08);margin:0 4.500px 0 4px;gap:7px;font-size:15.500px}
.tray{display:flex;align-items:center;margin-left:auto;padding-right:24px}
.c,.d{padding-bottom:3px}
.c{text-align:center;width:40px}.d{display:flex;flex-direction:column;align-items:flex-end}
.n{width:21px;height:21px;border-radius:50%;background:#4cc2ff;color:#0c2431;font-size:12.500px;line-height:20px;text-align:center;margin-left:13px}`,
  `<div class="w">${ic('sunset')}<div><div>${t('31°C', 28)}</div><p>${t('Sunset coming', 99)}</p></div></div>
  <task-app icon="win" s="29" style="margin-left:25px"></task-app><div class="s">${ic('magW')}${t('Search', 44)}</div>
  <task-app icon="taskview"></task-app><task-app icon="chat"></task-app><task-app icon="explorer" run></task-app><task-app icon="edge"></task-app><task-app icon="store"></task-app>
  <task-app icon="gethelp" badge="dot"></task-app><task-app icon="mcafee"></task-app><task-app icon="py"></task-app><task-app icon="docker"></task-app><task-app icon="whatsapp" badge="1" run></task-app>
  <task-app icon="chrome" badge="av" active run></task-app><task-app icon="mail" badge="6" run></task-app><task-app icon="term" run></task-app><task-app icon="vscode" run></task-app>
  <div class="tray">${ic('trayUp')}<span style="margin:0 18px 0 17.500px">${ic('keyb')}</span><div class="c"><div>${t('ENG', 28.5)}</div><div>${t('IN', 14.5)}</div></div>
  <span style="margin:0 9.500px 0 17px">${ic('wifi')}</span>${ic('mute')}<span style="margin:0 21.500px 0 10.500px">${ic('batt')}</span>
  <div class="d">${t('05:41 PM', 59.5)}${t('21-03-2023', 74.5)}</div><div class="n">10</div></div>`);
</script>
</body>
</html>
